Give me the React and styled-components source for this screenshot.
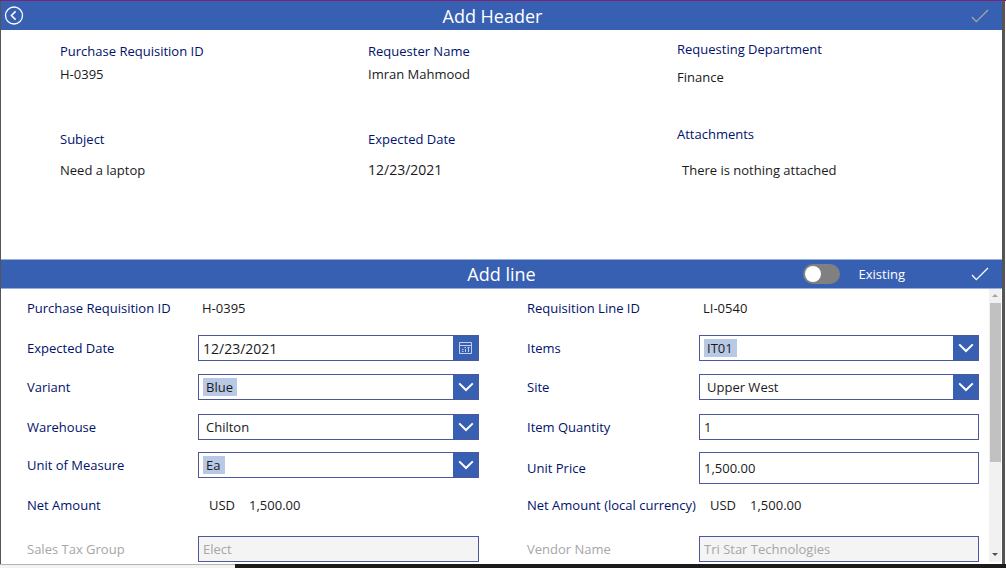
import React, { useState } from "react";
import styled, { createGlobalStyle, css } from "styled-components";

const GlobalStyle = createGlobalStyle`
  * {
    box-sizing: border-box;
  }
  body {
    margin: 0;
    font-family: "Open Sans", "Noto Sans", sans-serif;
    font-size: 13px;
    line-height: 20px;
    color: #1a1a1a;
    background: #ffffff;
  }
  button, input, select {
    font: inherit;
    color: inherit;
    border: 0;
    padding: 0;
    margin: 0;
    background: none;
    outline: none;
  }
`;

const requisition = [
  {
    id: "who",
    items: [
      { label: "Purchase Requisition ID", value: "H-0395" },
      { label: "Subject", value: "Need a laptop" },
    ],
  },
  {
    id: "when",
    items: [
      { label: "Requester Name", value: "Imran Mahmood" },
      { label: "Expected Date", value: "12/23/2021", date: true },
    ],
  },
  {
    id: "where",
    spread: true,
    items: [
      { label: "Requesting Department", value: "Finance" },
      { label: "Attachments", value: "There is nothing attached", inset: true },
    ],
  },
];

const leftFields = [
  { id: "req-id", type: "text", label: "Purchase Requisition ID", value: "H-0395" },
  { id: "exp-date", type: "date", label: "Expected Date", value: "12/23/2021" },
  { id: "variant", type: "select", label: "Variant", value: "Blue", tag: true },
  { id: "warehouse", type: "select", label: "Warehouse", value: "Chilton" },
  { id: "uom", type: "select", label: "Unit of Measure", value: "Ea", tag: true },
  { id: "net", type: "amount", label: "Net Amount", currency: "USD", value: "1,500.00" },
  { id: "tax", type: "input", label: "Sales Tax Group", value: "Elect", disabled: true },
];

const rightFields = [
  { id: "line-id", type: "text", label: "Requisition Line ID", value: "LI-0540" },
  { id: "items", type: "select", label: "Items", value: "IT01", tag: true },
  { id: "site", type: "select", label: "Site", value: "Upper West" },
  { id: "qty", type: "input", label: "Item Quantity", value: "1" },
  { id: "price", type: "input", label: "Unit Price", value: "1,500.00", tall: true },
  { id: "net-local", type: "amount", label: "Net Amount (local currency)", currency: "USD", value: "1,500.00" },
  { id: "vendor", type: "input", label: "Vendor Name", value: "Tri Star Technologies", disabled: true },
];

const CheckIcon = () => (
  <svg width="18" height="14" viewBox="0 0 18 14" fill="none" stroke="currentColor" strokeWidth="1.3">
    <path d="M1 8 L5.3 12.6 L17 1" />
  </svg>
);

const BackIcon = () => (
  <svg width="20" height="20" viewBox="0 0 20 20" fill="none" stroke="currentColor" strokeWidth="1.3">
    <circle cx="10" cy="9.5" r="8.5" />
    <path d="M11.6 5.4 L7.4 9.5 L11.6 13.6" strokeWidth="1.5" />
  </svg>
);

const ChevronIcon = () => (
  <svg width="16" height="10" viewBox="0 0 16 10" fill="none" stroke="currentColor" strokeWidth="2">
    <path d="M1.2 1.4 L8 8 L14.8 1.4" />
  </svg>
);

const CalendarIcon = () => (
  <svg width="14" height="14" viewBox="0 0 14 14" fill="none" stroke="#c3d0ea">
    <path d="M0.5 1.5 H12.5 V12.5 H0.5 Z M0.5 4.5 H12.5" />
    <path d="M3 8.5 H4.5 M5.5 6.5 H7 M8.5 6.5 H10.5 M3 10.5 H4.5 M6.5 8 V11 M9.5 7 V11" />
  </svg>
);

const Control = ({ field }) => {
  const [value, setValue] = useState(field.value);
  const onChange = (e) => setValue(e.target.value);

  if (field.type === "text") {
    return <Output id={field.id}>{field.value}</Output>;
  }
  if (field.type === "amount") {
    return (
      <Amount id={field.id}>
        <span>{field.currency}</span>
        <span>{field.value}</span>
      </Amount>
    );
  }
  if (field.type === "select") {
    return (
      <Box>
        <Select id={field.id} value={value} onChange={onChange} $tag={field.tag}>
          <option>{field.value}</option>
        </Select>
        <Drop>
          <ChevronIcon />
        </Drop>
      </Box>
    );
  }
  if (field.type === "date") {
    return (
      <Box>
        <TextInput id={field.id} value={value} onChange={onChange} $date />
        <Drop as="button" type="button" aria-label="Open calendar">
          <CalendarIcon />
        </Drop>
      </Box>
    );
  }
  return (
    <Box $tall={field.tall} $disabled={field.disabled}>
      <TextInput id={field.id} value={value} onChange={onChange} disabled={field.disabled} />
    </Box>
  );
};

const FieldColumn = ({ fields, wide }) => (
  <Column>
    {fields.map((field) => (
      <Field key={field.id} $wide={wide}>
        <FieldLabel htmlFor={field.id} $disabled={field.disabled} $tall={field.tall}>
          {field.label}
        </FieldLabel>
        <Control field={field} />
      </Field>
    ))}
  </Column>
);

const App = () => {
  const [existing, setExisting] = useState(false);

  return (
    <>
      <GlobalStyle />
      <Screen>
        <Frame>
          <HeaderBar>
            <IconButton type="button" aria-label="Back">
              <BackIcon />
            </IconButton>
            <Title>Add Header</Title>
            <IconButton type="button" aria-label="Save header" disabled>
              <CheckIcon />
            </IconButton>
          </HeaderBar>
          <Summary>
            {requisition.map((group) => (
              <SummaryGroup key={group.id} $spread={group.spread}>
                {group.items.map((item) => (
                  <React.Fragment key={item.label}>
                    <Term>{item.label}</Term>
                    <Detail $date={item.date} $inset={item.inset}>
                      {item.value}
                    </Detail>
                  </React.Fragment>
                ))}
              </SummaryGroup>
            ))}
          </Summary>
          <LineBar>
            <Title>Add line</Title>
            <Tools>
              <Toggle
                type="checkbox"
                id="existing"
                checked={existing}
                onChange={(e) => setExisting(e.target.checked)}
              />
              <ToggleLabel htmlFor="existing">Existing</ToggleLabel>
              <IconButton type="button" aria-label="Save line">
                <CheckIcon />
              </IconButton>
            </Tools>
          </LineBar>
          <Body>
            <Form>
              <FieldColumn fields={leftFields} />
              <FieldColumn fields={rightFields} wide />
            </Form>
            <ScrollBar aria-hidden="true">
              <Arrow $muted />
              <Track>
                <Thumb />
              </Track>
              <Arrow $down />
            </ScrollBar>
          </Body>
        </Frame>
        <Footer>
          <FooterLight />
          <FooterDark />
        </Footer>
      </Screen>
    </>
  );
};

const Screen = styled.div`
  height: 100vh;
  display: flex;
  flex-direction: column;
  overflow: hidden;
  border-top: 1px solid #7a2474;
`;

const Frame = styled.main`
  flex: 1;
  min-height: 0;
  display: flex;
  flex-direction: column;
  border-left: 1px solid #555555;
  border-right: 3px solid #555555;
  margin-right: 1px;
`;

const bar = css`
  flex: none;
  display: grid;
  align-items: center;
  height: 29px;
  color: #ffffff;
  background: #3860b2;
`;

const HeaderBar = styled.header`
  ${bar}
  grid-template-columns: 26px 1fr 44px;
`;

const LineBar = styled.header`
  ${bar}
  height: 30px;
  grid-template-columns: 1fr auto 1fr;
  border-top: 1px solid #9aaedb;
  border-bottom: 1px solid #9aaedb;
  ${() => Title} {
    grid-column: 2;
  }
`;

const Title = styled.h1`
  margin: 0;
  font-size: 18px;
  font-weight: 400;
  line-height: 28px;
  text-align: center;
`;

const Tools = styled.div`
  display: flex;
  justify-content: flex-end;
  align-items: center;
  padding-right: 10px;
`;

const IconButton = styled.button`
  display: flex;
  align-items: center;
  justify-content: center;
  height: 28px;
  padding: 0 3px;
  &:disabled {
    color: #a6a6a6;
  }
`;

const Toggle = styled.input`
  appearance: none;
  width: 37px;
  height: 20px;
  padding: 2px;
  border-radius: 10px;
  background: #808080;
  &::before {
    content: "";
    display: block;
    width: 16px;
    height: 16px;
    border-radius: 50%;
    background: #ffffff;
  }
  &:checked::before {
    margin-left: auto;
  }
`;

const ToggleLabel = styled.label`
  margin: 0 63px 0 19px;
`;

const Summary = styled.section`
  flex: none;
  display: grid;
  grid-template-columns: 308px 309px 1fr;
  height: 229px;
  padding-left: 59px;
`;

const SummaryGroup = styled.dl`
  display: grid;
  align-content: start;
  margin: 0;
  padding-top: ${({ $spread }) => ($spread ? "9px" : "11px")};
  grid-template-rows: ${({ $spread }) => ($spread ? "28px 57px 36px 20px" : "23px 65px 31px 20px")};
`;

const Term = styled.dt`
  color: #00126b;
`;

const Detail = styled.dd`
  margin: 0;
  padding-left: ${({ $inset }) => ($inset ? "5px" : "0")};
  font-size: ${({ $date }) => ($date ? "14px" : "13px")};
`;

const Body = styled.section`
  flex: 1;
  min-height: 0;
  display: flex;
  overflow: hidden;
`;

const Form = styled.form`
  flex: 1;
  display: grid;
  grid-template-columns: 1fr 1fr;
  column-gap: 48px;
  padding: 6px 10px 0 26px;
`;

const Column = styled.div`
  display: grid;
  align-content: start;
  grid-template-rows: 40px 39px 40px 38px 40px 44px 26px;
`;

const Field = styled.div`
  display: grid;
  align-items: start;
  grid-template-columns: ${({ $wide }) => ($wide ? "172px" : "171px")} 1fr;
`;

const FieldLabel = styled.label`
  line-height: ${({ $tall }) => ($tall ? "32px" : "26px")};
  white-space: nowrap;
  color: ${({ $disabled }) => ($disabled ? "#a6a6a6" : "#00126b")};
`;

const Output = styled.output`
  padding-left: 4px;
  line-height: 26px;
`;

const Amount = styled.output`
  display: flex;
  gap: 14px;
  padding-left: 11px;
  line-height: 26px;
`;

const Box = styled.div`
  display: flex;
  align-items: center;
  height: ${({ $tall }) => ($tall ? "32px" : "26px")};
  border: 1px solid #4d589c;
  padding-left: 4px;
  color: ${({ $disabled }) => ($disabled ? "#a6a6a6" : "inherit")};
  background: ${({ $disabled }) => ($disabled ? "#f4f4f4" : "#ffffff")};
`;

const TextInput = styled.input`
  flex: 1;
  min-width: 0;
  height: 24px;
  font-size: ${({ $date }) => ($date ? "14px" : "13px")};
`;

const Select = styled.select`
  appearance: none;
  height: 18px;
  line-height: 18px;
  padding: 0 4px 0 3px;
  ${({ $tag }) =>
    $tag
      ? css`
          background: #b8c9e6;
        `
      : css`
          flex: 1;
        `}
`;

const Drop = styled.span`
  display: flex;
  align-items: center;
  justify-content: center;
  flex: none;
  width: 25px;
  height: 24px;
  margin-left: auto;
  color: #ffffff;
  background: #3860b2;
`;

const ScrollBar = styled.div`
  flex: none;
  display: flex;
  flex-direction: column;
  align-items: center;
  width: 12px;
  margin: 0 1px 2px 0;
  background: #f1f1f1;
`;

const Arrow = styled.span`
  flex: none;
  width: 6px;
  height: 14px;
  background: ${({ $muted }) => ($muted ? "#a3a3a3" : "#505050")};
  clip-path: ${({ $down }) =>
    $down ? "polygon(0 5px, 6px 5px, 3px 8px)" : "polygon(0 8px, 6px 8px, 3px 5px)"};
`;

const Track = styled.div`
  flex: 1;
  width: 11px;
`;

const Thumb = styled.div`
  height: 65%;
  background: #c1c1c1;
`;

const Footer = styled.footer`
  flex: none;
  display: flex;
  height: 4px;
`;

const FooterLight = styled.div`
  width: 235px;
  background: #f3f3f3;
  border-top: 1px solid #b5b5b5;
`;

const FooterDark = styled.div`
  flex: 1;
  background: #1b1b1b;
`;

export default App;
